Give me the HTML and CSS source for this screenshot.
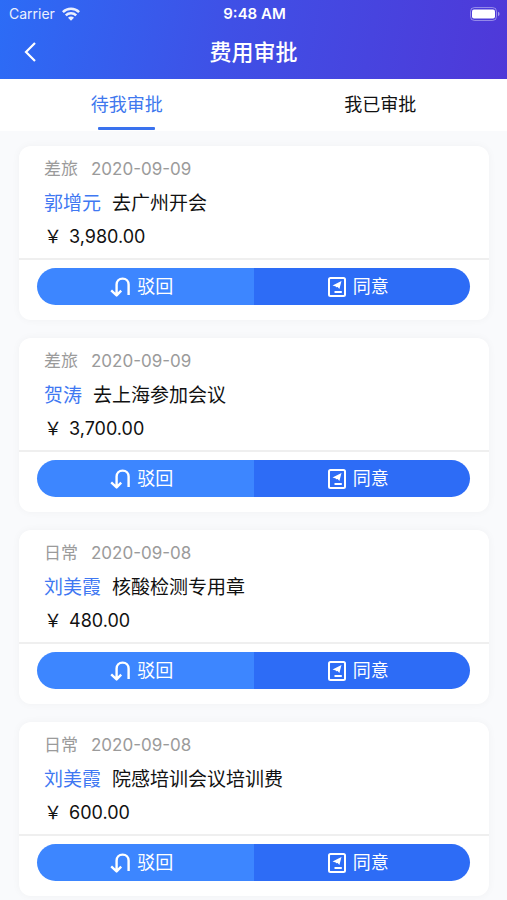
FILE: index.html
```html
<!DOCTYPE html>
<html lang="zh-CN">
<head>
<meta charset="utf-8">
<meta name="viewport" content="width=device-width, initial-scale=1">
<title>费用审批</title>
<link rel="stylesheet" href="styles.css">
</head>
<body>
<svg class="sprite" aria-hidden="true">
  <symbol id="icon-return" viewBox="0 0 20 20">
    <path d="M1.2 13.4 6.6 18.4 11.2 13.6M6.6 18V7.6C6.6 4 9 1.6 12.6 1.6S18.6 4 18.6 7.6V18" fill="none" stroke="currentColor" stroke-width="2.4" stroke-linejoin="round"/>
  </symbol>
  <symbol id="icon-agree" viewBox="0 0 18 20">
    <rect x="1" y="1" width="16" height="18" rx="1.5" fill="none" stroke="currentColor" stroke-width="2"/>
    <path d="M13.5 4 4.5 8.6 7.8 9.4 8.2 10.2 9.6 10 11.4 12Z" fill="currentColor"/>
    <path d="M6.5 15H13.8" stroke="currentColor" stroke-width="2"/>
  </symbol>
</svg>
<header class="header">
  <div class="status">
    <div class="carrier">Carrier
      <svg class="wifi" viewBox="0 0 18 14" aria-hidden="true">
        <path d="M.9 5.1A11.4 11.4 0 0 1 17.1 5.1M3.8 8.3A7.4 7.4 0 0 1 14.2 8.3" fill="none" stroke="#fff" stroke-width="2.5"/>
        <path d="M9 13.8 6 10.8A4.2 4.2 0 0 1 12 10.8Z" fill="#fff"/>
      </svg>
    </div>
    <div class="clock">9:48 AM</div>
    <svg class="battery" viewBox="0 0 30 14" aria-hidden="true">
      <rect x=".5" y=".5" width="26" height="13" rx="4" fill="none" stroke="#fff" stroke-opacity=".4"/>
      <rect x="2" y="2.5" width="23" height="9" rx="2" fill="#fff"/>
      <path d="M28 4.8Q29.6 5.4 29.6 7T28 9.2Z" fill="#fff" opacity=".5"/>
    </svg>
  </div>
  <div class="navbar">
    <button class="back" aria-label="返回">
      <svg viewBox="0 0 12 20" aria-hidden="true"><path d="M11 1 2 10 11 19" fill="none" stroke="#fff" stroke-width="2.2"/></svg>
    </button>
    <h1>费用审批</h1>
  </div>
</header>
<nav class="tabs">
  <a class="tab active" href="#pending" aria-current="page">待我审批</a>
  <a class="tab" href="#done">我已审批</a>
</nav>
<main class="list" id="pending">
  <article class="card">
    <div class="info">
      <p class="meta"><span>差旅</span><time>2020-09-09</time></p>
      <p class="line"><span class="name">郭增元</span><span>去广州开会</span></p>
      <p class="amount"><span>￥</span><span>3,980.00</span></p>
    </div>
    <div class="actions">
      <button class="reject"><svg class="i-return"><use href="#icon-return"/></svg><span>驳回</span></button>
      <button class="agree"><svg class="i-agree"><use href="#icon-agree"/></svg><span>同意</span></button>
    </div>
  </article>
  <article class="card">
    <div class="info">
      <p class="meta"><span>差旅</span><time>2020-09-09</time></p>
      <p class="line"><span class="name">贺涛</span><span>去上海参加会议</span></p>
      <p class="amount"><span>￥</span><span>3,700.00</span></p>
    </div>
    <div class="actions">
      <button class="reject"><svg class="i-return"><use href="#icon-return"/></svg><span>驳回</span></button>
      <button class="agree"><svg class="i-agree"><use href="#icon-agree"/></svg><span>同意</span></button>
    </div>
  </article>
  <article class="card">
    <div class="info">
      <p class="meta"><span>日常</span><time>2020-09-08</time></p>
      <p class="line"><span class="name">刘美霞</span><span>核酸检测专用章</span></p>
      <p class="amount"><span>￥</span><span>480.00</span></p>
    </div>
    <div class="actions">
      <button class="reject"><svg class="i-return"><use href="#icon-return"/></svg><span>驳回</span></button>
      <button class="agree"><svg class="i-agree"><use href="#icon-agree"/></svg><span>同意</span></button>
    </div>
  </article>
  <article class="card">
    <div class="info">
      <p class="meta"><span>日常</span><time>2020-09-08</time></p>
      <p class="line"><span class="name">刘美霞</span><span>院感培训会议培训费</span></p>
      <p class="amount"><span>￥</span><span>600.00</span></p>
    </div>
    <div class="actions">
      <button class="reject"><svg class="i-return"><use href="#icon-return"/></svg><span>驳回</span></button>
      <button class="agree"><svg class="i-agree"><use href="#icon-agree"/></svg><span>同意</span></button>
    </div>
  </article>
</main>
</body>
</html>
```
FILE: styles.css
```css
* {
  box-sizing: border-box;
}

body {
  margin: 0;
  background: #f9fafc;
  color: #111;
  font-family: Inter, "Noto Sans CJK SC", sans-serif;
  font-size: 18px;
}

h1,
p {
  margin: 0;
}

button {
  border: 0;
  padding: 0;
  background: none;
  color: inherit;
  font: inherit;
  cursor: pointer;
}

.sprite {
  position: absolute;
  width: 0;
  height: 0;
}

.header {
  background: linear-gradient(100deg, #2c6cf6 0%, #3f50e6 45%, #4f38d8 100%);
  color: #fff;
}

.status {
  display: grid;
  grid-template-columns: 1fr auto 1fr;
  align-items: center;
  height: 27px;
  padding: 0 7px 0 9px;
  font-size: 14px;
}

.carrier {
  display: flex;
  align-items: center;
  gap: 7px;
  opacity: .9;
}

.wifi {
  width: 18px;
  height: 14px;
}

.clock {
  font-size: 15px;
  font-weight: 600;
}

.battery {
  justify-self: end;
  width: 30px;
  height: 14px;
}

.navbar {
  display: grid;
  grid-template-columns: 1fr auto 1fr;
  align-items: center;
  height: 52px;
  padding-bottom: 2px;
}

.back {
  justify-self: start;
  display: flex;
  padding: 4px 24px;
}

.back svg {
  width: 12px;
  height: 20px;
}

h1 {
  font-size: 22px;
  font-weight: 500;
  line-height: 32px;
}

.tabs {
  display: flex;
  background: #fff;
}

.tab {
  flex: 1;
  display: flex;
  flex-direction: column;
  align-items: center;
  height: 52px;
  padding-top: 10px;
  color: #111;
  font-size: 18px;
  line-height: 32px;
  text-decoration: none;
}

.active {
  color: #4078ee;
}

.active::after {
  content: "";
  width: 57px;
  height: 3px;
  margin-top: 6px;
  border-radius: 1px;
  background: #3a72ee;
}

.list {
  display: grid;
  gap: 18px;
  padding: 15px 18px 5px 19px;
}

.card {
  border-radius: 12px;
  background: #fff;
  box-shadow: 0 0 8px rgba(0, 0, 0, .04);
}

.info {
  padding: 6px 25px;
  border-bottom: 2px solid #efefef;
  line-height: 34px;
}

.info p {
  display: flex;
}

.meta {
  gap: 13px;
  color: #9b9b9b;
  font-size: 17px;
}

.info .line {
  gap: 11px;
  font-size: 19px;
  line-height: 36px;
}

.name {
  color: #4078f2;
}

.info .amount {
  gap: 7px;
  line-height: 30px;
}

.actions {
  display: flex;
  padding: 8px 19px 15px 18px;
}

.actions button {
  flex: 1;
  display: flex;
  align-items: center;
  justify-content: center;
  gap: 7px;
  height: 37px;
  padding-right: 7px;
  color: #fff;
  line-height: 25px;
}

.actions .reject {
  border-radius: 19px 0 0 19px;
  background: #3d86ff;
}

.actions .agree {
  border-radius: 0 19px 19px 0;
  background: #2d6cf6;
}

.i-return {
  width: 20px;
  height: 20px;
}

.i-agree {
  width: 18px;
  height: 20px;
}
```
